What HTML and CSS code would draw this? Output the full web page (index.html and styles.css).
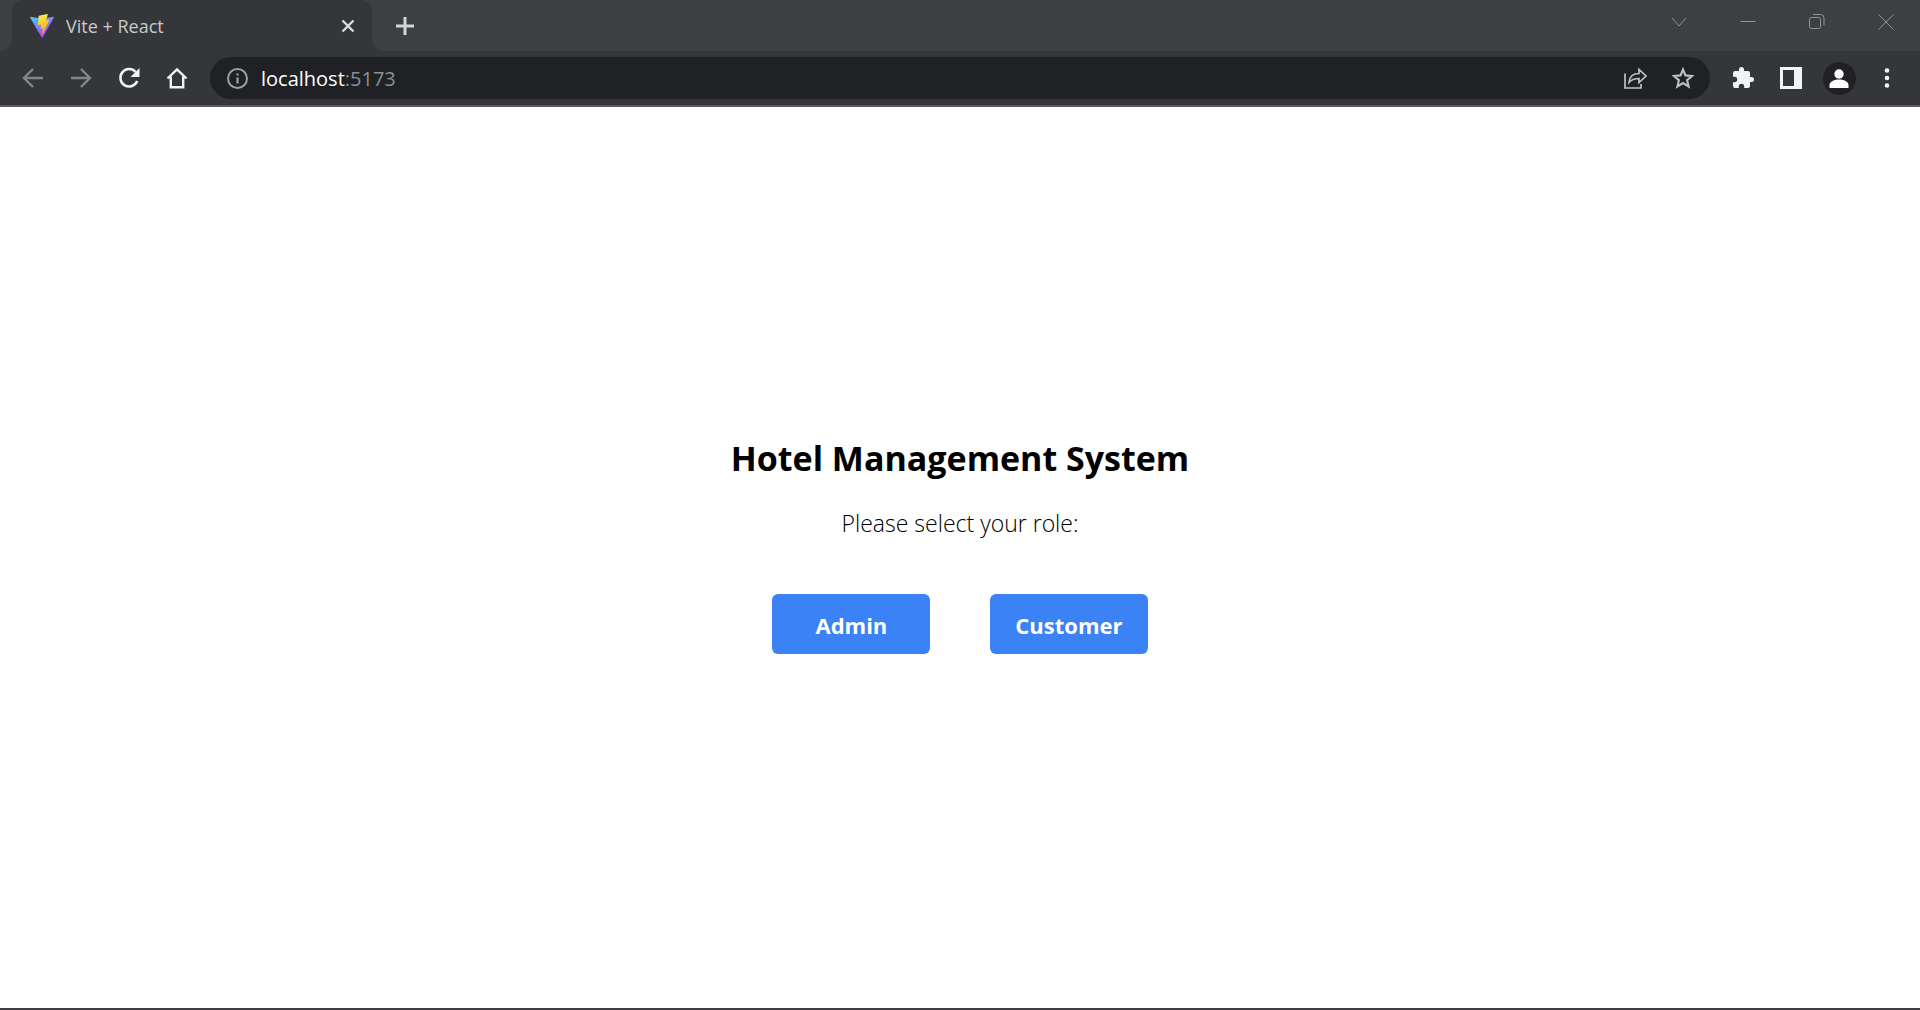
FILE: index.html
```html
<!DOCTYPE html>
<html lang="en">
<head>
<meta charset="utf-8">
<title>Vite + React</title>
<link rel="stylesheet" href="styles.css">
</head>
<body>
<div class="browser">
  <header class="chrome">
    <div class="tab-strip">
      <div class="strip-start"></div>
      <div class="tab">
        <svg class="favicon" viewBox="0 0 24 24" aria-hidden="true">
          <defs>
            <linearGradient id="vite-shield" x1="0" y1="0" x2="0.6" y2="1"><stop offset="0" stop-color="#41d1ff"/><stop offset="1" stop-color="#bd34fe"/></linearGradient>
            <linearGradient id="vite-bolt" x1="0.4" y1="0" x2="0.6" y2="1"><stop offset="0" stop-color="#ffea83"/><stop offset="0.2" stop-color="#ffdd35"/><stop offset="1" stop-color="#ffa800"/></linearGradient>
          </defs>
          <path d="M23.9 3.6 12.7 23.5q-.5.7-1 0L.1 3.6q-.3-.9.7-.8L12 4.8l11.200-2q1 0 .7.800Z" fill="url(#vite-shield)"/>
          <path d="M17.200.1 9 1.700q-.4.1-.4.500L8 10.700q0 .5.500.4l2.300-.5q.5 0 .4.5l-.7 3.300q0 .5.500.4l1.500-.4q.5-.1.4.4l-1.100 5.200c0 .4.400.5.700.1L19.300 6.400q.2-.5-.3-.5l-2.500.5q-.5 0-.3-.5l1.600-5.200q.1-.6-.6-.6Z" fill="url(#vite-bolt)"/>
        </svg>
        <span class="tab-title">Vite + React</span>
        <button class="tab-close" aria-label="Close tab"><svg class="icon" viewBox="0 0 24 24"><path d="m6.500 6.500 11 11M17.500 6.500l-11 11" stroke-width="2.400"/></svg></button>
      </div>
      <div class="strip-rest">
        <button class="new-tab" aria-label="New tab"><svg class="icon" viewBox="0 0 24 24"><path d="M12 3v18M3 12h18" stroke-width="3"/></svg></button>
        <div class="window-controls">
          <button aria-label="Search tabs"><svg class="icon" viewBox="0 0 24 24"><path d="m5 8 7 8 7-8"/></svg></button>
          <button aria-label="Minimize"><svg class="icon" viewBox="0 0 24 24"><path d="M4.500 11.500h15"/></svg></button>
          <button aria-label="Restore"><svg class="icon" viewBox="0 0 24 24"><rect x="4.500" y="7.500" width="11" height="11" rx="2"/><path d="M8 4.500h7.500q3.500 0 3.500 3.500v7.500"/></svg></button>
          <button aria-label="Close window"><svg class="icon" viewBox="0 0 24 24"><path d="m4.500 4.500 15 15M19.500 4.500l-15 15"/></svg></button>
        </div>
      </div>
    </div>
    <nav class="toolbar" aria-label="Browser toolbar">
      <button class="tool dim" aria-label="Back"><svg class="icon" viewBox="0 0 24 24"><path d="M22 12H4M12 3l-9 9 9 9" stroke-width="2.400"/></svg></button>
      <button class="tool dim" aria-label="Forward"><svg class="icon" viewBox="0 0 24 24"><path d="M2 12h18M12 3l9 9-9 9" stroke-width="2.400"/></svg></button>
      <button class="tool" aria-label="Reload"><svg class="icon" viewBox="0 0 24 24"><path d="M20.200 15a8.700 8.700 0 1 1-1.700-9.100" stroke-width="2.500"/><path class="solid" d="M22.500 2v9h-9Z"/></svg></button>
      <button class="tool" aria-label="Home"><svg class="icon" viewBox="0 0 24 24"><path d="M2.500 12.500 12 3.500l9.500 9M5.800 10.500v10.700h12.400V10.500" stroke-width="2.400"/></svg></button>
      <div class="omnibox">
        <svg class="icon info" viewBox="0 0 24 24" aria-hidden="true"><circle cx="12.500" cy="12.500" r="9.500" stroke-width="2"/><path d="M12.500 11.500v6M12.500 7.500v2" stroke-width="2.300"/></svg>
        <a class="address" href="#">localhost<span class="port">:5173</span></a>
        <button class="tool soft" aria-label="Share"><svg class="icon" viewBox="0 0 24 24"><path d="M2 7.500V22h16v-4M6 16.500c.5-6 4-9 10-9v-4l7 6.500-7 6.500v-4c-4.500 0-7.500 1-10 4Z" stroke-width="1.700"/></svg></button>
        <button class="tool soft" aria-label="Bookmark"><svg class="icon" viewBox="0 0 24 24"><path d="m12 3.500 2.500 5.900 6.500.6-4.900 4.200 1.500 6.300-5.600-3.400-5.600 3.400 1.500-6.300L3 10l6.500-.6Z" stroke-width="2.100"/></svg></button>
      </div>
      <button class="tool" aria-label="Extensions"><svg class="icon" viewBox="0 0 24 24"><path class="solid" d="M20.500 11H19V7a2 2 0 0 0-2-2h-4V3.500a2.500 2.500 0 0 0-5 0V5H4a2 2 0 0 0-2 2v3.800h1.500a2.700 2.700 0 0 1 0 5.400H2V20a2 2 0 0 0 2 2h3.800v-1.500a2.700 2.700 0 0 1 5.400 0V22H17a2 2 0 0 0 2-2v-4h1.500a2.500 2.500 0 0 0 0-5Z"/></svg></button>
      <button class="tool" aria-label="Side panel"><svg class="icon" viewBox="0 0 24 24"><path class="solid" fill-rule="evenodd" d="M1 1h22v22H1ZM4 4v16h11V4Z"/></svg></button>
      <button class="tool" aria-label="Profile"><span class="avatar"><svg class="icon" viewBox="0 0 24 24"><circle class="solid" cx="12" cy="8" r="4.700"/><path class="solid" d="M2.500 22v-3c0-3.500 5-5.500 9.500-5.500s9.500 2 9.500 5.500v3Z"/></svg></span></button>
      <button class="tool" aria-label="Menu"><svg class="icon" viewBox="0 0 24 24"><circle class="solid" cx="12" cy="4.500" r="2.300"/><circle class="solid" cx="12" cy="12" r="2.300"/><circle class="solid" cx="12" cy="19.500" r="2.300"/></svg></button>
    </nav>
  </header>
  <main class="page">
    <h1>Hotel Management System</h1>
    <p>Please select your role:</p>
    <div class="roles">
      <button class="role admin">Admin</button>
      <button class="role">Customer</button>
    </div>
  </main>
</div>
</body>
</html>
```

FILE: styles.css
```css
* { box-sizing: border-box; }
body {
  margin: 0;
  font-family: "Open Sans", "Noto Sans", sans-serif;
  background: #fff;
}
button {
  border: 0;
  padding: 0;
  background: none;
  color: inherit;
  font: inherit;
  display: flex;
  align-items: center;
  justify-content: center;
}
.browser {
  min-height: 100vh;
  display: flex;
  flex-direction: column;
  border-bottom: 2px solid #3f3e42;
}
.icon {
  width: 24px;
  height: 24px;
  flex: none;
  fill: none;
  stroke: currentColor;
}
.solid { fill: currentColor; stroke: none; }

.chrome {
  background: #35363a;
  border-bottom: 2px solid #5b5a5f;
}
/* The strip colour shows behind the rounded top corners of the open tab. */
.tab-strip {
  display: flex;
  height: 51px;
  background: linear-gradient(#3c4043 50%, #35363a 50%);
}
.strip-start {
  width: 12px;
  background: #3c4043;
  border-bottom-right-radius: 12px;
}
.tab {
  width: 360px;
  display: flex;
  align-items: center;
  padding: 0 12px 0 18px;
  background: #35363a;
  border-radius: 12px 12px 0 0;
}
.favicon { width: 24px; height: 24px; }
.tab-title {
  flex: 1;
  margin-left: 12px;
  font-size: 18px;
  color: #c8cacd;
}
.tab-close { width: 24px; height: 24px; color: #dcdde0; }
.strip-rest {
  flex: 1;
  display: flex;
  justify-content: space-between;
  background: #3c4043;
  border-bottom-left-radius: 12px;
}
.new-tab { width: 42px; margin-left: 12px; color: #d4d5d7; }
.window-controls { display: flex; height: 43px; color: #919496; }
.window-controls button { width: 69px; }

.toolbar {
  display: flex;
  align-items: center;
  height: 54px;
  padding: 0 9px;
}
.tool { width: 48px; height: 42px; color: #f1f3f4; }
.dim { color: #85868a; }
.soft { color: #bdc1c6; }
.omnibox {
  flex: 1;
  display: flex;
  align-items: center;
  height: 42px;
  margin: 0 9px;
  padding: 0 3px 0 15px;
  border-radius: 21px;
  background: #202124;
}
.info { color: #9aa0a6; }
.address {
  flex: 1;
  margin-left: 12px;
  font-size: 20px;
  color: #fff;
  text-decoration: none;
}
.port { color: #8b8e92; }
.avatar {
  width: 33px;
  height: 33px;
  display: flex;
  align-items: center;
  justify-content: center;
  border-radius: 50%;
  background: #202124;
  color: #fff;
}

.page {
  flex: 1;
  display: flex;
  flex-direction: column;
  align-items: center;
  justify-content: center;
  padding-bottom: 30px;
  color: #000;
}
h1 {
  margin: 0 0 20px;
  font-size: 34px;
  line-height: 54px;
  font-weight: 700;
}
p {
  margin: 0 0 53px;
  font-size: 23px;
  line-height: 36px;
  font-weight: 300;
}
.roles { display: flex; gap: 60px; }
.role {
  height: 60px;
  padding: 2px 25px 0;
  border-radius: 6px;
  background: #3b82f6;
  color: #fff;
  font-size: 22px;
  font-weight: 700;
}
.admin { padding: 2px 43px 0; }
```
